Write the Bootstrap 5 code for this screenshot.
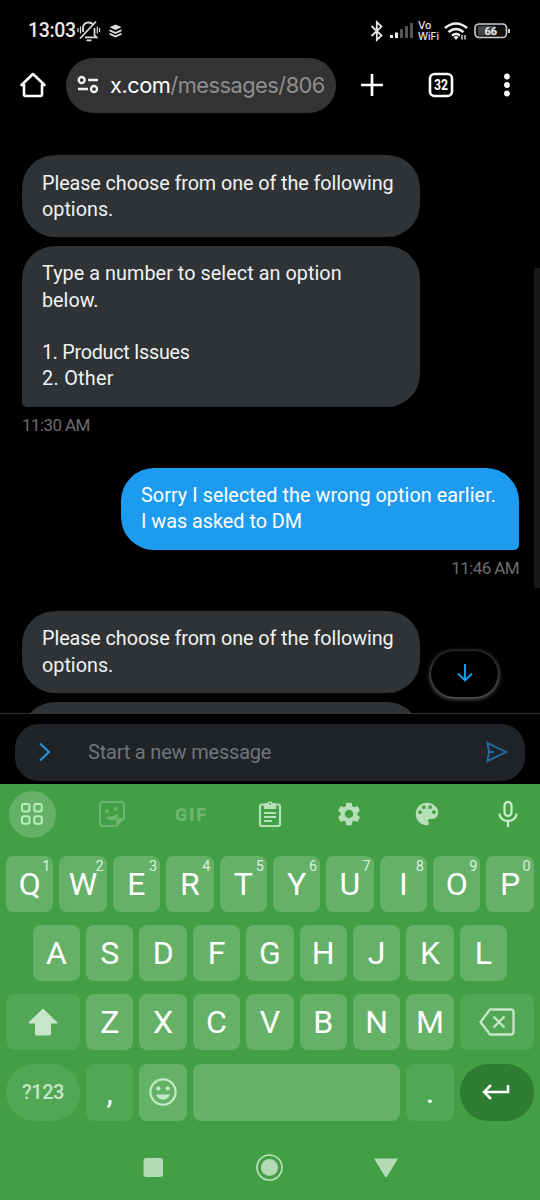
<!DOCTYPE html>
<html lang="en">
<head>
<meta charset="utf-8">
<meta name="viewport" content="width=device-width, initial-scale=1">
<title>Messages</title>
<link href="https://cdn.jsdelivr.net/npm/bootstrap@5.3.0/dist/css/bootstrap.min.css" rel="stylesheet">
<style>
body{background:#000;font-family:Roboto,"Liberation Sans",sans-serif;width:540px;height:1200px;overflow:hidden;color:#fff}
svg{display:block;flex:none;overflow:visible}
.status{height:57px;padding:4px 30px 0 28px}
.clock{font-size:19.5px;letter-spacing:-.35px;color:#e8e8e8;font-weight:500;line-height:24px;width:49px}
.tools{height:56px;padding:0 16px 0 16px}
.url{background:#333;width:270px;height:55px;margin-left:16px;padding:0 10px 0 11px}
.address{font:21.8px/30px Inter,sans-serif;letter-spacing:-.5px;width:216px;margin-left:11px;color:#8e8e8e;overflow:hidden;white-space:nowrap}
.plus{margin-left:24px}
.tabs{margin-left:44px}
.dots{margin-right:13px}
.chat{height:600px;padding:42px 21px 0 22px;overflow:hidden}
.bubble{background:#2f3336;width:398px;min-height:82.3px;border-radius:33px;padding:15.5px 0 14.2px 20px;font-size:19.8px;line-height:26.2px;flex:none;color:#f0f2f3}
.bubble span{white-space:nowrap;display:block;min-height:26.2px}
.ls-a{letter-spacing:-.08px}
.ls-b{letter-spacing:.06px}
.ls-c{letter-spacing:-.3px}
.ls-d{letter-spacing:.3px}
.next{margin-top:8.7px}
.later{margin-top:32.5px}
.tail-l{border-bottom-left-radius:5px}
.tail-r{border-bottom-right-radius:5px;background:#1d9bf0;color:#fff}
.stamp{font-size:17px;letter-spacing:-.6px;line-height:20px;color:#6b6e72;margin-top:8.5px;flex:none}
.thumb{right:0;top:268px;width:6px;height:320px;background:#17181a}
.jump{left:431px;top:651px;width:67px;height:46px;background:#000;box-shadow:0 1px 4px 1px #66696c}
.compose{height:71px;border-top:1px solid #2f3336;padding:10px 15px 0}
.field{background:#202327;height:57px;border-radius:24px;padding:0 17px 2px 22px}
.hint{font-size:20px;letter-spacing:-.2px;color:#71767b;margin-left:36px}
.keyboard{background:#439f46;height:416px;color:#fff}
.strip{height:60px;padding:0 8.5px;color:#b7dfb8}
.cell{width:47px;height:47px;display:flex;align-items:center;justify-content:center}
.cell.on{background:#65b168;border-radius:50%}
.off{color:#6cb76f}
.keys{display:grid;grid-template-columns:repeat(20,26.7px);grid-template-rows:56px 56px 56px 57.5px;row-gap:13.3px;padding:11.7px 3px 0;height:278px}
.key{grid-column:span 2;margin:0 3px;background:#64b167;border-radius:8px;display:flex;align-items:center;justify-content:center;position:relative;font-size:32px;line-height:1}
.key sup{position:absolute;right:3px;top:4px;font-size:14.5px;line-height:14px;color:#d9f0d9}
.first{grid-column:2 / span 2}
.wide{grid-column:span 3}
.dim{background:#52a755;color:#c5e5c6}
.space{grid-column:span 8}
.round{border-radius:29px}
.num{font-size:20px;font-weight:500;letter-spacing:-.5px}
.enter{background:#2e7d32;color:#fff}
.system{height:78px;padding-top:31px}
</style>
</head>
<body>
<header>
<div class="status d-flex align-items-center">
 <span class="clock">13:03</span>
 <svg width="24" height="22" viewBox="0 0 24 22" fill="none" stroke="#ddd" stroke-width="1.8"><path d="M6 12V8.500q0-6 5.500-6 3 0 4.500 2M17.500 8v7l2 2.300H8M3 18.500 19 1.500M9.500 20.300h5"/><path d="M1 8v4M3.500 6.500v7M22.500 8v4M20.300 6.500v7" stroke-width="1.200"/></svg>
 <svg class="ms-2" width="13" height="14" viewBox="0 0 14 14" fill="#ddd"><path d="m7 0 6.500 3L7 6 .5 3zM.5 5 7 8l6.500-3v2.300L7 10.300.5 7.300zM.5 8.800l6.500 3 6.500-3V11L7 14 .5 11z"/></svg>
 <div class="ms-auto d-flex align-items-center">
  <svg width="14" height="20" viewBox="0 0 14 20" fill="none" stroke="#e5e5e5" stroke-width="1.800"><path d="m1.500 5 10 9.500L6.800 19V1l4.700 4.500-10 9.500"/></svg>
  <svg class="ms-1 me-1" width="26" height="16" viewBox="0 0 26 16"><path d="M2 12h3v3H2zM7 9.500h3V15H7z" fill="#eee"/><path d="M12 6h3v9h-3zM17 3h3v12h-3zM22 0h3v15h-3z" fill="#555"/></svg>
  <svg width="26" height="22" viewBox="0 0 26 22" fill="#e5e5e5" font-family="Inter" font-size="10.500" font-weight="500"><text x="0" y="9">Vo</text><text x="0" y="19.500" textLength="21" lengthAdjust="spacingAndGlyphs">WiFi</text></svg>
  <svg width="24" height="20" viewBox="0 0 24 20" fill="none" stroke="#eee" stroke-width="2.400"><path d="M1 7q11-9 22 0M4.500 11q7.500-6 15 0M8 14.500q4-3 8 0"/><path d="m9.500 16 2.500 3 2.500-3q-2.500-2-5 0z" fill="#eee" stroke="none"/><path d="M18 14v4.500M21 14v4.500" stroke-width="1.300"/></svg>
  <svg class="ms-2" width="34" height="16" viewBox="0 0 34 16"><rect x="-1" y="1" width="31.500" height="13.500" rx="4" fill="#111" stroke="#ccc" stroke-width="1.600"/><path d="M2 3h17v9.500H2z" fill="#444"/><path d="M32 6h2v4h-2z" fill="#ccc"/><text x="14.700" y="11.800" fill="#eee" font-family="Roboto" font-weight="700" font-size="11" text-anchor="middle">66</text></svg>
 </div>
</div>
<nav class="tools d-flex align-items-center">
 <svg width="34" height="34" viewBox="0 0 34 34" fill="none" stroke="#fff" stroke-width="2.600" stroke-linejoin="round"><path d="M5.500 17H8v9.500q0 1.500 1.500 1.500h15q1.500 0 1.500-1.500V17h2.500L17 6z"/></svg>
 <div class="url rounded-pill d-flex align-items-center">
  <svg width="22" height="18" viewBox="0 0 22 18" fill="none" stroke="#f1f1f1" stroke-width="2.300"><circle cx="4.700" cy="4" r="3"/><circle cx="17" cy="13" r="3"/><path d="M11 4h10M1 13h10"/></svg>
  <div class="address"><span class="text-white">x.com</span>/messages/8068</div>
 </div>
 <svg class="plus" width="24" height="24" viewBox="0 0 24 24" stroke="#fff" stroke-width="2.700"><path d="M12 1v22M1 12h22"/></svg>
 <svg class="tabs" width="26" height="26" viewBox="0 0 26 26"><rect x="2" y="2" width="22" height="22" rx="4.500" fill="none" stroke="#fff" stroke-width="2.600"/><text x="13" y="17.800" fill="#fff" text-anchor="middle" font-family="Roboto" font-size="14" font-weight="700" textLength="14" lengthAdjust="spacingAndGlyphs">32</text></svg>
 <svg class="ms-auto dots" width="8" height="24" viewBox="0 0 8 24" fill="#fff"><circle cx="4" cy="3.500" r="2.900"/><circle cx="4" cy="12" r="2.900"/><circle cx="4" cy="20.500" r="2.900"/></svg>
</nav>
</header>
<main class="chat d-flex flex-column">
 <div class="bubble"><span class="ls-a">Please choose from one of the following</span><span>options.</span></div>
 <div class="bubble tail-l next"><span class="ls-b">Type a number to select an option</span><span>below.</span><span></span><span class="ls-c">1. Product Issues</span><span class="ls-d">2. Other</span></div>
 <div class="stamp">11:30 AM</div>
 <div class="bubble tail-r ms-auto later"><span class="ls-b">Sorry I selected the wrong option earlier.</span><span>I was asked to DM</span></div>
 <div class="stamp ms-auto">11:46 AM</div>
 <div class="bubble later"><span class="ls-a">Please choose from one of the following</span><span>options.</span></div>
 <div class="bubble next"></div>
</main>
<div class="thumb position-absolute"></div>
<div class="jump position-absolute rounded-pill d-flex align-items-center justify-content-center"><svg width="18" height="20" viewBox="0 0 18 20" fill="none" stroke="#1d9bf0" stroke-width="1.900"><path d="M9 0v16M2 9.500l7 7 7-7"/></svg></div>
<div class="compose">
 <div class="field d-flex align-items-center">
  <svg width="15" height="20" viewBox="0 0 15 20" fill="none" stroke="#1d9bf0" stroke-width="2"><path d="m3 1.500 9 8.500-9 8.500"/></svg>
  <span class="hint">Start a new message</span>
  <svg class="ms-auto" width="23" height="22" viewBox="0 0 23 22" fill="none" stroke="#216fa6" stroke-width="1.900"><path d="M2.500 2 21 11 2.500 20 4 11zM4 11h5"/></svg>
 </div>
</div>
<section class="keyboard">
 <div class="strip d-flex align-items-center justify-content-between">
  <div class="cell on"><svg width="24" height="24" viewBox="0 0 24 24" fill="none" stroke="#b9efba" stroke-width="2"><rect x="2" y="2" width="7.500" height="7.500" rx="2"/><rect x="14.300" y="2" width="7.500" height="7.500" rx="2"/><rect x="2" y="14.300" width="7.500" height="7.500" rx="2"/><rect x="14.300" y="14.300" width="7.500" height="7.500" rx="2"/></svg></div>
  <div class="cell off"><svg width="28" height="28" viewBox="0 0 28 28" fill="none" stroke="currentColor" stroke-width="2.100"><path d="M27 18V5q0-3-3-3H6Q3 2 3 5v18q0 3 3 3h13z"/><path d="M19 26v-5q0-3 3-3h5l-8 8z" fill="currentColor" stroke="none"/><circle cx="10" cy="11" r="1.900" fill="currentColor" stroke="none"/><circle cx="18.500" cy="9" r="1.900" fill="currentColor" stroke="none"/><path d="M8.500 16.500q7 1 13-2.500-1 6-6 6.500-4.500 0-7-4z" fill="currentColor" stroke="none"/></svg></div>
  <div class="cell off"><svg width="31" height="15" viewBox="0 0 31 15"><text x="0" y="14.200" textLength="31" lengthAdjust="spacing" fill="currentColor" font-family="Roboto" font-size="18" font-weight="900">GIF</text></svg></div>
  <div class="cell"><svg width="26" height="28" viewBox="0 0 26 28" fill="none" stroke="currentColor" stroke-width="2.200"><rect x="3" y="4.500" width="20" height="21.500" rx="2"/><path d="M8 4.500V8h10V4.500M7 13h12M7 17h12M7 21h8"/><path d="M8 3h2.500a2.700 2.700 0 0 1 5 0H18v5H8z" fill="currentColor" stroke="none"/><circle cx="13" cy="4" r="1" fill="#439f46" stroke="none"/></svg></div>
  <div class="cell"><svg width="28" height="28" viewBox="0 0 24 24" fill="currentColor"><path d="M19.140 12.940c.04-.3.060-.610.060-.94 0-.320-.020-.640-.070-.940l2.030-1.580c.180-.140.230-.410.120-.610l-1.920-3.320c-.120-.220-.370-.290-.590-.220l-2.390.960c-.5-.380-1.030-.7-1.620-.940l-.360-2.540c-.040-.240-.240-.410-.480-.410h-3.840c-.240 0-.430.170-.470.410l-.36 2.540c-.590.240-1.130.570-1.620.940l-2.390-.960c-.220-.080-.470 0-.590.220L2.740 8.870c-.120.210-.080.470.12.610l2.030 1.580c-.050.3-.090.630-.090.940s.020.640.070.940l-2.030 1.580c-.180.140-.230.410-.12.610l1.920 3.320c.12.220.37.290.59.220l2.390-.960c.5.380 1.030.7 1.620.940l.36 2.540c.050.240.24.410.48.410h3.840c.24 0 .44-.17.47-.41l.36-2.540c.59-.24 1.130-.56 1.620-.94l2.390.96c.22.080.47 0 .59-.22l1.920-3.320c.12-.22.070-.47-.12-.61l-2.010-1.580zM12 15.600c-1.980 0-3.600-1.620-3.600-3.600s1.620-3.600 3.600-3.600 3.600 1.620 3.600 3.600-1.620 3.600-3.600 3.600z"/></svg></div>
  <div class="cell"><svg class="me-1" width="30" height="30" viewBox="0 0 24 24" fill="currentColor"><path d="M12 3a9 9 0 0 0 0 18c.830 0 1.500-.670 1.500-1.500 0-.39-.15-.74-.39-1.010-.23-.26-.38-.61-.38-.99 0-.83.67-1.500 1.500-1.500H16c2.760 0 5-2.240 5-5 0-4.420-4.030-8-9-8zm-5.500 9a1.500 1.500 0 1 1 0-3 1.500 1.500 0 0 1 0 3zm3-4a1.500 1.500 0 1 1 0-3 1.500 1.500 0 0 1 0 3zm5 0a1.500 1.500 0 1 1 0-3 1.500 1.500 0 0 1 0 3zm3 4a1.500 1.500 0 1 1 0-3 1.500 1.500 0 0 1 0 3z"/></svg></div>
  <div class="cell"><svg width="22" height="28" viewBox="0 0 22 28" fill="none" stroke="#c5ebc5" stroke-width="2.300"><rect x="7.500" y="2" width="7" height="14" rx="3.500"/><path d="M2.500 13.500a8.500 7.500 0 0 0 17 0M11 21v6"/></svg></div>
 </div>
 <div class="keys">
  <div class="key">Q<sup>1</sup></div><div class="key">W<sup>2</sup></div><div class="key">E<sup>3</sup></div><div class="key">R<sup>4</sup></div><div class="key">T<sup>5</sup></div><div class="key">Y<sup>6</sup></div><div class="key">U<sup>7</sup></div><div class="key">I<sup>8</sup></div><div class="key">O<sup>9</sup></div><div class="key">P<sup>0</sup></div>
  <div class="key first">A</div><div class="key">S</div><div class="key">D</div><div class="key">F</div><div class="key">G</div><div class="key">H</div><div class="key">J</div><div class="key">K</div><div class="key">L</div>
  <div class="key wide dim"><svg width="30" height="28" viewBox="0 0 30 28" fill="#c8e5c9"><path d="M15 .5 29.500 14.500q0 1-1 1H23V26q0 1.500-1.500 1.500h-13Q7 27.500 7 26V15.500H1.500q-1 0-1-1z"/></svg></div><div class="key">Z</div><div class="key">X</div><div class="key">C</div><div class="key">V</div><div class="key">B</div><div class="key">N</div><div class="key">M</div>
  <div class="key wide dim"><svg width="36" height="28" viewBox="0 0 36 28" fill="none" stroke="#c5e5c6" stroke-width="2.300" stroke-linejoin="round"><path d="M11 1.500h21q2.500 0 2.500 2.500v20q0 2.500-2.500 2.500H11L1.500 14zM14.500 8.500l11 11M25.500 8.500l-11 11"/></svg></div>
  <div class="key wide dim round num">?123</div><div class="key dim text-white">,</div>
  <div class="key"><svg width="28" height="28" viewBox="0 0 28 28" fill="#c4ecc4"><circle cx="14" cy="14" r="12.600" fill="none" stroke="#c4ecc4" stroke-width="2.200"/><circle cx="9.300" cy="10.500" r="2.100"/><circle cx="18.700" cy="10.500" r="2.100"/><path d="M7 16.500h14q-2 5-7 5t-7-5z"/></svg></div>
  <div class="key space"></div><div class="key dim text-white">.</div>
  <div class="key wide round enter"><svg class="me-1" width="28" height="18" viewBox="0 0 28 18" fill="none" stroke="#fff" stroke-width="2.500"><path d="M27 2v7H3M10 2 3 9l7 7"/></svg></div>
 </div>
 <div class="system d-flex justify-content-center">
  <svg width="264" height="28" viewBox="0 0 264 28" fill="#b4dab5"><rect x="5.500" y="5" width="19.500" height="19" rx="3"/><circle cx="131.500" cy="14.500" r="12.500" fill="none" stroke="#b4e2b5" stroke-width="1.700"/><circle cx="131.500" cy="14.500" r="8.500"/><path d="M237 5.500h22q1 .2.500 1L249 23.500q-1 1-2 0L236.500 6.500q-.2-1 .5-1z"/></svg>
 </div>
</section>
<script src="https://cdn.jsdelivr.net/npm/bootstrap@5.3.0/dist/js/bootstrap.bundle.min.js"></script>
</body>
</html>
